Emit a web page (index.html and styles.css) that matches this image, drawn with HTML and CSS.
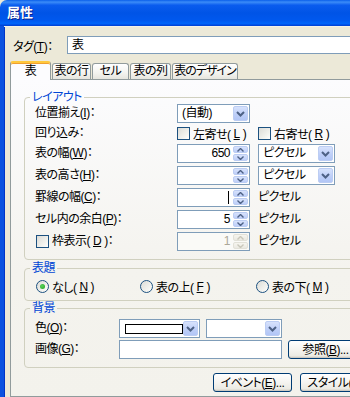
FILE: index.html
```html
<!DOCTYPE html>
<html lang="ja">
<head>
    <meta charset="UTF-8">
    <meta name="viewport" content="width=device-width, initial-scale=1.0">
    <title>属性</title>
    <link rel="stylesheet" href="styles.css">
</head>
<body>
    <div class="window">
        <div class="titlebar"><span class="title">属性</span></div>
        <div class="frame">
            <div class="client">
                <div class="tag-row">
                    <span class="tag-label">タグ(<u>T</u>)：</span>
                    <div class="textbox tag-input">表</div>
                </div>

                <div class="tabs">
                    <div class="tab active">表</div>
                    <div class="tab tab-row">表の行</div>
                    <div class="tab tab-cell">セル</div>
                    <div class="tab tab-col">表の列</div>
                    <div class="tab tab-design">表のデザイン</div>
                </div>

                <div class="panel">
                    <fieldset class="group">
                        <legend>レイアウト</legend>
                        <div class="layout-grid">
                            <span class="label">位置揃え(<u>I</u>)：</span>
                            <div class="combo">
                                <span class="combo-text">(自動)</span>
                                <span class="combo-btn"><svg width="9" height="6" viewBox="0 0 9 6"><path d="M1 1l3.5 3.5L8 1" fill="none" stroke="#4D6185" stroke-width="2"/></svg></span>
                            </div>
                            <span></span>

                            <span class="label">回り込み：</span>
                            <label class="check-item"><span class="check"></span>左寄せ(<u>L</u>)</label>
                            <label class="check-item"><span class="check"></span>右寄せ(<u>R</u>)</label>

                            <span class="label">表の幅(<u>W</u>)：</span>
                            <div class="spin">
                                <span class="spin-val">650</span>
                                <span class="spin-btns">
                                    <span class="spin-btn"><svg width="7" height="4" viewBox="0 0 7 4"><path d="M0.5 3.5l3-3 3 3" fill="none" stroke="#4D6185" stroke-width="1.4"/></svg></span>
                                    <span class="spin-btn"><svg width="7" height="4" viewBox="0 0 7 4"><path d="M0.5 0.5l3 3 3-3" fill="none" stroke="#4D6185" stroke-width="1.4"/></svg></span>
                                </span>
                            </div>
                            <div class="combo">
                                <span class="combo-text">ピクセル</span>
                                <span class="combo-btn"><svg width="9" height="6" viewBox="0 0 9 6"><path d="M1 1l3.5 3.5L8 1" fill="none" stroke="#4D6185" stroke-width="2"/></svg></span>
                            </div>

                            <span class="label">表の高さ(<u>H</u>)：</span>
                            <div class="spin">
                                <span class="spin-val"></span>
                                <span class="spin-btns">
                                    <span class="spin-btn"><svg width="7" height="4" viewBox="0 0 7 4"><path d="M0.5 3.5l3-3 3 3" fill="none" stroke="#4D6185" stroke-width="1.4"/></svg></span>
                                    <span class="spin-btn"><svg width="7" height="4" viewBox="0 0 7 4"><path d="M0.5 0.5l3 3 3-3" fill="none" stroke="#4D6185" stroke-width="1.4"/></svg></span>
                                </span>
                            </div>
                            <div class="combo">
                                <span class="combo-text">ピクセル</span>
                                <span class="combo-btn"><svg width="9" height="6" viewBox="0 0 9 6"><path d="M1 1l3.5 3.5L8 1" fill="none" stroke="#4D6185" stroke-width="2"/></svg></span>
                            </div>

                            <span class="label">罫線の幅(<u>C</u>)：</span>
                            <div class="spin">
                                <span class="spin-val"><span class="caret"></span></span>
                                <span class="spin-btns">
                                    <span class="spin-btn"><svg width="7" height="4" viewBox="0 0 7 4"><path d="M0.5 3.5l3-3 3 3" fill="none" stroke="#4D6185" stroke-width="1.4"/></svg></span>
                                    <span class="spin-btn"><svg width="7" height="4" viewBox="0 0 7 4"><path d="M0.5 0.5l3 3 3-3" fill="none" stroke="#4D6185" stroke-width="1.4"/></svg></span>
                                </span>
                            </div>
                            <span class="unit">ピクセル</span>

                            <span class="label">セル内の余白(<u>P</u>)：</span>
                            <div class="spin">
                                <span class="spin-val">5</span>
                                <span class="spin-btns">
                                    <span class="spin-btn"><svg width="7" height="4" viewBox="0 0 7 4"><path d="M0.5 3.5l3-3 3 3" fill="none" stroke="#4D6185" stroke-width="1.4"/></svg></span>
                                    <span class="spin-btn"><svg width="7" height="4" viewBox="0 0 7 4"><path d="M0.5 0.5l3 3 3-3" fill="none" stroke="#4D6185" stroke-width="1.4"/></svg></span>
                                </span>
                            </div>
                            <span class="unit">ピクセル</span>

                            <label class="label check-item frame-check"><span class="check"></span>枠表示(<u>D</u>)：</label>
                            <div class="spin disabled">
                                <span class="spin-val">1</span>
                                <span class="spin-btns">
                                    <span class="spin-btn"><svg width="7" height="4" viewBox="0 0 7 4"><path d="M0.5 3.5l3-3 3 3" fill="none" stroke="#C9C7BA" stroke-width="1.4"/></svg></span>
                                    <span class="spin-btn"><svg width="7" height="4" viewBox="0 0 7 4"><path d="M0.5 0.5l3 3 3-3" fill="none" stroke="#C9C7BA" stroke-width="1.4"/></svg></span>
                                </span>
                            </div>
                            <span class="unit">ピクセル</span>
                        </div>
                    </fieldset>

                    <fieldset class="group caption">
                        <legend>表題</legend>
                        <div class="radio-row">
                            <label class="radio-item"><span class="radio on"></span>なし(<u>N</u>)</label>
                            <label class="radio-item"><span class="radio"></span>表の上(<u>F</u>)</label>
                            <label class="radio-item"><span class="radio"></span>表の下(<u>M</u>)</label>
                        </div>
                    </fieldset>

                    <fieldset class="group background">
                        <legend>背景</legend>
                        <div class="bg-grid">
                            <span class="label">色(<u>O</u>)：</span>
                            <div class="combo">
                                <span class="combo-text swatch-box"><span class="swatch"></span></span>
                                <span class="combo-btn"><svg width="9" height="6" viewBox="0 0 9 6"><path d="M1 1l3.5 3.5L8 1" fill="none" stroke="#4D6185" stroke-width="2"/></svg></span>
                            </div>
                            <div class="combo">
                                <span class="combo-text"></span>
                                <span class="combo-btn"><svg width="9" height="6" viewBox="0 0 9 6"><path d="M1 1l3.5 3.5L8 1" fill="none" stroke="#4D6185" stroke-width="2"/></svg></span>
                            </div>
                            <span></span>

                            <span class="label">画像(<u>G</u>)：</span>
                            <div class="textbox image-input"></div>
                            <button class="btn browse">参照(<u>B</u>)...</button>
                        </div>
                    </fieldset>

                    <div class="actions">
                        <button class="btn">イベント(<u>E</u>)...</button>
                        <button class="btn">スタイル(<u>S</u>)...</button>
                    </div>
                </div>
            </div>
        </div>
    </div>
</body>
</html>
```

FILE: styles.css
```css
* {
    box-sizing: border-box;
}
body {
    margin: 0;
    width: 350px;
    height: 397px;
    overflow: hidden;
    background: #ECE9D8;
    font-family: "Liberation Sans", "Noto Sans CJK JP", sans-serif;
    font-size: 12px;
    letter-spacing: -0.5px;
    color: #000;
    font-feature-settings: "palt";
}
u {
    text-decoration: underline;
    text-underline-offset: 1px;
}

/* window chrome */
.window {
    width: 400px;
    height: 397px;
    display: flex;
    flex-direction: column;
}
.titlebar {
    height: 26px;
    flex: none;
    display: flex;
    align-items: center;
    padding-left: 7px;
    border-top-left-radius: 7px;
    background: linear-gradient(#0A5FEA 0%, #3B8CF8 8%, #0A5CEE 20%, #0054E6 50%, #0058EE 78%, #0065FA 90%, #0049DE 97%, #003FD0 100%);
}
.title {
    color: #fff;
    font-weight: bold;
    font-size: 13px;
    line-height: 16px;
    letter-spacing: 0;
    text-shadow: 1px 1px 0 #0A1E8C;
}
.frame {
    flex: 1;
    display: flex;
    border-left: 4px solid #0B52E0;
    box-shadow: inset 1px 0 0 #0035C8;
}
.client {
    flex: 1;
    display: flex;
    flex-direction: column;
    padding-left: 6px;
    border-top: 1px solid #F4F2E8;
}

/* tag row */
.tag-row {
    display: flex;
    align-items: center;
    margin-top: 9px;
    padding-left: 3px;
}
.tag-label {
    width: 54px;
}
.textbox {
    height: 18px;
    border: 1px solid #7F9DB9;
    background: #fff;
    line-height: 16px;
}
.tag-input {
    flex: 1;
    padding-left: 4px;
}

/* tabs */
.tabs {
    display: flex;
    align-items: flex-end;
    height: 18px;
    margin-top: 7px;
    gap: 1px;
}
.tab {
    flex: none;
    height: 16px;
    padding: 0;
    text-align: center;
    white-space: nowrap;
    line-height: 15px;
    border: 1px solid #919B9C;
    border-bottom: none;
    border-radius: 3px 3px 0 0;
    background: linear-gradient(#FFFFFF, #F3F3EF 60%, #E6E5DE);
}
.tab.active {
    position: relative;
    z-index: 1;
    height: 19px;
    width: 41px;
    margin-bottom: -1px;
    border-top: 2px solid #FFC83C;
    line-height: 16px;
    background: #FCFCFE;
    box-shadow: inset 0 1px 0 #F0A030;
}
.tab-row {
    width: 39px;
}
.tab-cell {
    width: 37px;
}
.tab-col {
    width: 41px;
}
.tab-design {
    width: 66px;
    letter-spacing: -1px;
}

/* tab page */
.panel {
    flex: 1;
    padding: 10px 13px 0 13px;
    border: 1px solid #919B9C;
    background: linear-gradient(#FCFCFE, #F4F3EE 60%, #F3F2EC);
}
.group {
    margin: 0;
    padding: 0 0 8px 0;
    min-width: 0;
    border: 1px solid #D0D0BF;
    border-radius: 4px;
}
.group legend {
    margin-left: 5px;
    padding: 0 2px;
    color: #0046D5;
    line-height: 14px;
}
.label {
    line-height: 19px;
    white-space: nowrap;
}

.layout-grid {
    display: grid;
    grid-template-columns: 134px 73px 77px;
    grid-template-rows: 20px 20px 22px 22px 22px 22px 19px;
    column-gap: 8px;
    padding-left: 10px;
}
.layout-grid > * {
    align-self: start;
}

/* drop-down */
.combo {
    height: 19px;
    display: flex;
    align-items: center;
    padding: 1px;
    border: 1px solid #7F9DB9;
    background: #fff;
}
.combo-text {
    flex: 1;
    padding-left: 3px;
    line-height: 15px;
    white-space: nowrap;
    overflow: hidden;
}
.combo-btn {
    width: 15px;
    height: 15px;
    flex: none;
    display: flex;
    align-items: center;
    justify-content: center;
    border: 1px solid #BCCDF3;
    border-radius: 2px;
    background: linear-gradient(#D7E2FC, #BDCEF8 60%, #B2C6F6);
}
.swatch-box {
    height: 15px;
    display: flex;
    align-items: center;
}
.swatch {
    width: 58px;
    height: 10px;
    margin-left: 1px;
    border: 1px solid #000;
    background: #fff;
}

/* up-down */
.spin {
    height: 19px;
    display: flex;
    padding: 1px;
    border: 1px solid #7F9DB9;
    background: #fff;
}
.spin-val {
    flex: 1;
    padding-right: 3px;
    text-align: right;
    line-height: 15px;
}
.spin-btns {
    width: 15px;
    display: flex;
    flex-direction: column;
    gap: 1px;
}
.spin-btn {
    flex: 1;
    display: flex;
    align-items: center;
    justify-content: center;
    border: 1px solid #BCCDF3;
    border-radius: 2px;
    background: linear-gradient(#D7E2FC, #BDCEF8);
}
.spin.disabled {
    background: #FAFAF7;
}
.spin.disabled .spin-val {
    color: #ACA899;
}
.spin.disabled .spin-btn {
    border-color: #E2E1D8;
    background: linear-gradient(#F6F5EF, #EAE9E1);
}
.caret {
    display: inline-block;
    width: 1px;
    height: 13px;
    margin-top: 1px;
    margin-right: 1px;
    background: #000;
    vertical-align: top;
}
.unit {
    line-height: 19px;
}

/* check boxes and radios */
.check-item,
.radio-item {
    display: flex;
    align-items: center;
    gap: 3px;
    height: 19px;
    white-space: nowrap;
}
.check {
    width: 13px;
    height: 13px;
    flex: none;
    border: 1px solid #1C5180;
    background: linear-gradient(135deg, #DCDCD7, #F4F4F0 70%, #FFFFFF);
}
.frame-check {
    margin-left: 1px;
}
.radio {
    width: 13px;
    height: 13px;
    flex: none;
    display: flex;
    align-items: center;
    justify-content: center;
    border: 1px solid #1C5180;
    border-radius: 50%;
    background: linear-gradient(135deg, #DCDCD7, #F4F4F0 70%, #FFFFFF);
}
.radio.on::after {
    content: "";
    width: 5px;
    height: 5px;
    border-radius: 50%;
    background: radial-gradient(circle at 40% 40%, #5AD25A, #21A121);
}

.caption {
    margin-top: 1px;
    padding-bottom: 4px;
}
.radio-row {
    display: grid;
    grid-template-columns: 104px 116px auto;
    padding: 2px 0 0 11px;
}

.background {
    padding-bottom: 8px;
}
.bg-grid {
    display: grid;
    grid-template-columns: 78px 81px 76px 75px;
    grid-template-rows: 19px 19px;
    column-gap: 6px;
    row-gap: 2px;
    padding: 4px 0 0 10px;
}
.image-input {
    grid-column: span 2;
    height: 19px;
}

/* buttons */
.btn {
    height: 19px;
    padding: 0;
    font: inherit;
    letter-spacing: -0.5px;
    color: #000;
    border: 1px solid #003C74;
    border-radius: 3px;
    background: linear-gradient(#FFFFFF, #F5F4F0 50%, #ECEBE4 85%, #D6D0C5);
    box-shadow: inset 0 -1px 0 #CDCAC3;
    line-height: 16px;
}
.browse {
    width: 75px;
}
.actions {
    display: flex;
    gap: 8px;
    margin-top: 5px;
    padding-left: 189px;
}
.actions .btn {
    width: 79px;
    flex: none;
}
```
